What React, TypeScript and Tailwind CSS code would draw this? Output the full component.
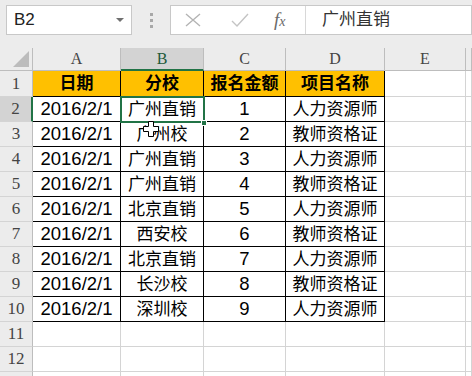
import React from "react";

const cols = [
  { key: "A", w: "w-[88px]" },
  { key: "B", w: "w-[83px]" },
  { key: "C", w: "w-[82px]" },
  { key: "D", w: "w-[99px]" },
  { key: "E", w: "w-[81px]" },
  { key: "F", w: "w-[6px]" },
];

const data: string[][] = [
  ["日期", "分校", "报名金额", "项目名称"],
  ["2016/2/1", "广州直销", "1", "人力资源师"],
  ["2016/2/1", "广州校", "2", "教师资格证"],
  ["2016/2/1", "广州直销", "3", "人力资源师"],
  ["2016/2/1", "广州直销", "4", "教师资格证"],
  ["2016/2/1", "北京直销", "5", "人力资源师"],
  ["2016/2/1", "西安校", "6", "教师资格证"],
  ["2016/2/1", "北京直销", "7", "人力资源师"],
  ["2016/2/1", "长沙校", "8", "教师资格证"],
  ["2016/2/1", "深圳校", "9", "人力资源师"],
  ["", "", "", ""],
  ["", "", "", ""],
  ["", "", "", ""],
];

const sans = "font-['Liberation_Sans','Noto_Sans_CJK_SC',sans-serif]";
const serif = "font-['Liberation_Serif','DejaVu_Serif',serif]";

export default function App() {
  return (
    <div className={`w-[472px] h-[376px] overflow-hidden bg-white ${sans}`}>
      {/* Top formula bar */}
      <div className="h-[48px] bg-[#ececec] flex items-start pt-[5px] pl-[6px]">
        <div className="w-[126px] h-[30px] bg-white border border-[#c8c8c8] flex items-center justify-between pl-[7px] pr-[7px]">
          <span className="text-[17px] text-[#222]">B2</span>
          <svg width="8" height="5" viewBox="0 0 8 5">
            <polygon points="0,0 8,0 4,4" fill="#707070" />
          </svg>
        </div>
        <div className="w-[38px] h-[30px] flex flex-col items-center justify-center gap-[3px]">
          <div className="w-[3px] h-[3px] bg-[#a8a8a8]" />
          <div className="w-[3px] h-[3px] bg-[#a8a8a8]" />
          <div className="w-[3px] h-[3px] bg-[#a8a8a8]" />
        </div>
        <div className="flex-1 h-[30px] bg-white border border-[#c8c8c8] flex items-center">
          <div className="w-[135px] h-full flex items-center border-r border-[#d8d8d8]">
            <svg className="ml-[14px]" width="16" height="14" viewBox="0 0 16 14">
              <path d="M1 1 L15 13 M15 1 L1 13" stroke="#b4b4b4" strokeWidth="1.4" fill="none" />
            </svg>
            <svg className="ml-[30px]" width="18" height="14" viewBox="0 0 18 14">
              <path d="M1 8 L6 13 L17 1" stroke="#c4c4c4" strokeWidth="1.4" fill="none" />
            </svg>
            <span className={`ml-[25px] text-[19px] italic text-[#6a6a6a] ${serif}`}>
              f<span className="text-[14px]">x</span>
            </span>
          </div>
          <span className="ml-[16px] text-[17px] text-[#333]">广州直销</span>
        </div>
      </div>

      {/* Sheet */}
      <div className="relative">
        {/* Column headers */}
        <div className="flex h-[23px]">
          <div className="w-[33px] h-full bg-[#ececec] border-r border-b border-[#bdbdbd] flex items-end justify-end pr-[3px] pb-[3px]">
            <svg width="16" height="16" viewBox="0 0 16 16">
              <polygon points="16,0 16,16 0,16" fill="#bcbcbc" />
            </svg>
          </div>
          {cols.map((c) => (
            <div
              key={c.key}
              className={`${c.w} shrink-0 h-full flex items-center justify-center text-[16px] ${serif} border-r ${
                c.key === "B"
                  ? "bg-[#d3d3d3] text-[#1e5a3a] border-b-2 border-b-[#217346] border-r-[#bdbdbd]"
                  : "bg-[#ececec] text-[#444] border-b border-[#bdbdbd]"
              }`}
            >
              {c.key !== "F" ? c.key : ""}
            </div>
          ))}
        </div>

        {/* Rows */}
        {data.map((row, ri) => {
          const rn = ri + 1;
          const isHeader = ri === 0;
          const inTable = ri <= 9;
          const h = ri === 0 ? "h-[26px]" : "h-[25px]";
          return (
            <div key={ri} className={`flex ${h}`}>
              <div
                className={`w-[33px] shrink-0 h-full flex items-center justify-center text-[17px] ${serif} border-b border-[#d4d4d4] ${
                  rn === 2
                    ? "bg-[#d3d3d3] text-[#444] border-r-2 border-r-[#217346]"
                    : "bg-[#ececec] text-[#444] border-r border-r-[#bdbdbd]"
                }`}
              >
                {rn <= 12 ? rn : ""}
              </div>
              {cols.map((c, ci) => {
                const tableCell = inTable && ci < 4;
                const val = ci < 4 ? row[ci] : "";
                const isNum = /^[0-9/]+$/.test(val);
                return (
                  <div
                    key={c.key}
                    className={`${c.w} shrink-0 h-full flex items-center justify-center border-r border-b ${
                      tableCell ? "border-black" : "border-[#d4d4d4]"
                    } ${isHeader && ci < 4 ? "bg-[#ffc000] font-bold" : "bg-white"} ${
                      isNum ? "text-[18.5px]" : "text-[17px]"
                    } text-black leading-none`}
                  >
                    {val}
                  </div>
                );
              })}
            </div>
          );
        })}

        {/* Selection border on B2 */}
        <div className="absolute left-[120px] top-[48px] w-[85px] h-[27px] border-2 border-[#217346] pointer-events-none" />
        <div className="absolute left-[201px] top-[72px] w-[6px] h-[6px] bg-[#217346] border border-white" />

        {/* Cursor */}
        <svg className="absolute left-[143px] top-[73px]" width="16" height="16" viewBox="0 0 16 16">
          <polygon
            points="5.5,0.5 10.5,0.5 10.5,5.5 15.5,5.5 15.5,10.5 10.5,10.5 10.5,15.5 5.5,15.5 5.5,10.5 0.5,10.5 0.5,5.5 5.5,5.5"
            fill="white"
            stroke="black"
            strokeWidth="1"
          />
        </svg>
      </div>
    </div>
  );
}
